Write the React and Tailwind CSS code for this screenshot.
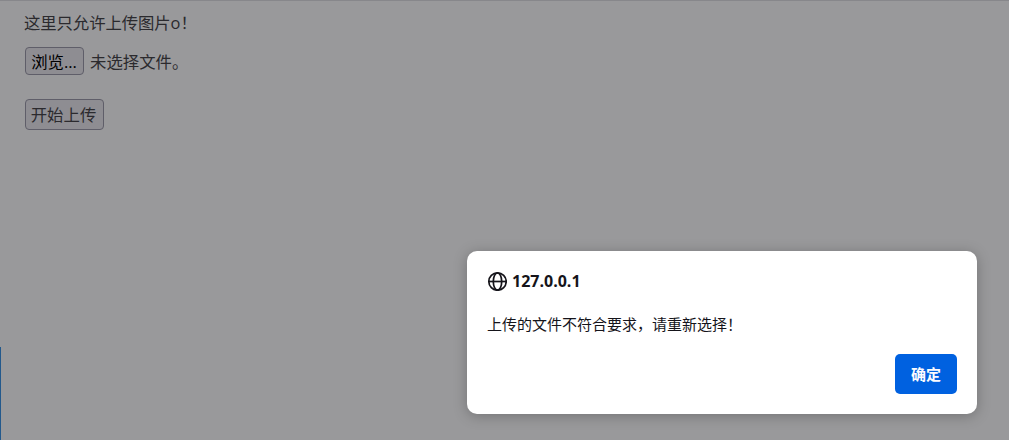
import { useState } from "react";

const GlobeIcon = () => (
  <svg
    className="h-5 w-5 shrink-0"
    viewBox="0 0 20 20"
    fill="none"
    stroke="#15141a"
    strokeWidth="1.7"
  >
    <circle cx="10.5" cy="10.5" r="8.7" />
    <ellipse cx="10.5" cy="10.5" rx="4.2" ry="8.7" />
    <path d="M1.8 10.5h17.4" />
  </svg>
);

const AlertDialog = ({ host, message, onClose }) => (
  <div
    role="alertdialog"
    className="absolute left-[467px] top-[250px] flex h-[163px] w-[510px] flex-col rounded-[10px] bg-white px-5 pb-5 pt-[19px] text-[15px] text-[#15141a] shadow-[0_2px_14px_rgba(0,0,0,0.25)]"
  >
    <div className="flex h-[22px] items-center gap-[5px]">
      <GlobeIcon />
      <h2 className="text-[16px] font-bold leading-[22px]">{host}</h2>
    </div>
    <p className="mt-[21px] leading-[22px]">{message}</p>
    <button
      onClick={onClose}
      className="mt-[19px] h-10 w-[62px] shrink-0 self-end rounded-[5px] bg-[#0061e0] font-semibold text-[#fbfbfe]"
    >
      确定
    </button>
  </div>
);

const App = () => {
  const [showAlert, setShowAlert] = useState(true);

  return (
    <div className="relative h-[440px] w-[1009px] overflow-hidden border-t border-[#87878b] bg-[#99999b] font-['Open_Sans','Noto_Sans_CJK_SC',sans-serif] text-[16.4px] text-[#2b2a2e]">
      <form className="flex flex-col items-start pl-[25px] pt-[10px]">
        <p className="-ml-px leading-[24px] tracking-[-0.1px]">这里只允许上传图片o！</p>
        <div className="mt-3 flex h-7 items-center gap-[6px]">
          <button
            type="button"
            className="h-7 w-[59px] rounded-[4px] border border-[#5f5e69] bg-[#8e8d92] pr-px pt-[2px] leading-[24px] text-black"
          >
            浏览...
          </button>
          <span className="pt-[2px]">未选择文件。</span>
        </div>
        <button
          type="button"
          className="mt-6 h-[31px] w-[79px] rounded-[4px] border border-[#5f5e69] bg-[#8e8d92] pr-[2px] leading-[29px]"
          onClick={() => setShowAlert(true)}
        >
          开始上传
        </button>
      </form>
      <div className="absolute bottom-0 left-0 h-[93px] w-px bg-[#23598c]" />
      {showAlert && (
        <AlertDialog
          host="127.0.0.1"
          message="上传的文件不符合要求，请重新选择！"
          onClose={() => setShowAlert(false)}
        />
      )}
    </div>
  );
};

export default App;
